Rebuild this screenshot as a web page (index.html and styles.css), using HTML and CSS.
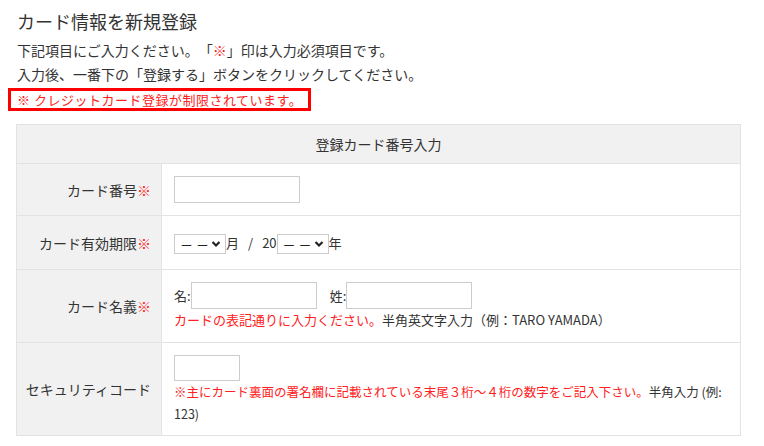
FILE: index.html
```html
<!DOCTYPE html>
<html lang="ja">
<head>
  <meta charset="UTF-8">
  <title>カード情報を新規登録</title>
  <link rel="stylesheet" href="styles.css">
</head>
<body>

  <div class="page">
    <h1>カード情報を新規登録</h1>
    <p class="lead">下記項目にご入力ください。「<span class="req">※</span>」印は入力必須項目です。</p>
    <p class="lead">入力後、一番下の「登録する」ボタンをクリックしてください。</p>
    <div class="alert">※ クレジットカード登録が制限されています。</div>

    <table class="card-form">
      <tr>
        <th class="head" colspan="2">登録カード番号入力</th>
      </tr>
      <tr>
        <th>カード番号<span class="req">※</span></th>
        <td><input type="text" class="field num"></td>
      </tr>
      <tr>
        <th>カード有効期限<span class="req">※</span></th>
        <td class="expiry">
          <span class="sel"><select><option>－ －</option></select><svg viewBox="0 0 10 8" width="10" height="8"><path d="M1.5 2 L5 5.5 L8.5 2" fill="none" stroke="#222" stroke-width="2.2"/></svg></span>月<span class="slash">/</span>20<span class="sel"><select><option>－ －</option></select><svg viewBox="0 0 10 8" width="10" height="8"><path d="M1.5 2 L5 5.5 L8.5 2" fill="none" stroke="#222" stroke-width="2.2"/></svg></span>年
        </td>
      </tr>
      <tr>
        <th>カード名義<span class="req">※</span></th>
        <td>
          <div class="names">
            <label>名:<input type="text" class="field name"></label>
            <label>姓:<input type="text" class="field name"></label>
          </div>
          <p class="note"><span class="red">カードの表記通りに入力ください。</span>半角英文字入力（例：TARO YAMADA）</p>
        </td>
      </tr>
      <tr>
        <th>セキュリティコード</th>
        <td class="sec">
          <input type="text" class="field code">
          <p class="note"><span class="red">※主にカード裏面の署名欄に記載されている末尾３桁～４桁の数字をご記入下さい。</span><span>半角入力 (例:</span> <span>123)</span></p>
        </td>
      </tr>
    </table>
  </div>

</body>
</html>
```

FILE: styles.css
```css
:root {
  --text: #333333;
  --red: #ff2020;
  --line: #e3e3e3;
  --label-bg: #f1f1f1;
  --field-border: #cccccc;
}

body {
  margin: 0;
  font-family: "Noto Sans CJK JP", "Noto Sans", sans-serif;
  color: var(--text);
  background: #ffffff;
  text-spacing-trim: space-all;
}

.page {
  padding: 0 8px;
}

h1 {
  margin: 8px 0 4px 9px;
  font-size: 18px;
  font-weight: normal;
  line-height: 26px;
}

.lead {
  margin: 0 0 0 9px;
  font-size: 14px;
  line-height: 24px;
}

.req,
.red {
  color: var(--red);
}

.alert {
  display: inline-block;
  margin-top: 1px;
  padding: 0 6px;
  border: 3px solid #ff0000;
  color: var(--red);
  font-size: 13px;
  line-height: 17px;
  letter-spacing: 0.5px;
}

.card-form {
  margin: 13px 0 0 8px;
  width: 725px;
  border-collapse: collapse;
  font-size: 14px;
}

.card-form th,
.card-form td {
  border: 1px solid var(--line);
}

.card-form th {
  width: 126px;
  padding: 0 10px 0 8px;
  background: var(--label-bg);
  font-weight: normal;
  text-align: right;
  vertical-align: middle;
  white-space: nowrap;
}

.card-form th.head {
  padding: 9px 0;
  line-height: 20px;
  text-align: center;
}

.card-form td {
  padding: 12px;
  line-height: 20px;
  vertical-align: top;
}

.field {
  box-sizing: border-box;
  display: block;
  height: 27px;
  border: 1px solid var(--field-border);
  border-radius: 0;
  margin: 0;
  padding: 0 4px;
  font: inherit;
}

.field.num {
  width: 126px;
}

.card-form td.expiry {
  height: 29px;
  font-size: 13px;
  line-height: 29px;
}

.expiry .sel {
  position: relative;
  display: inline-block;
  vertical-align: middle;
  line-height: 20px;
}

.sel select {
  appearance: none;
  display: block;
  box-sizing: border-box;
  width: 52px;
  height: 20px;
  margin: 0;
  padding: 0 0 0 5px;
  border: 1px solid var(--field-border);
  border-radius: 0;
  background: #fff;
  font: 13px "Noto Sans CJK JP", sans-serif;
  color: #222;
}

.sel svg {
  position: absolute;
  right: 5px;
  top: 6px;
}

.slash {
  margin: 0 9px;
}

.names {
  display: flex;
  gap: 13px;
  font-size: 13px;
}

.names label {
  display: flex;
  align-items: center;
}

.field.name {
  width: 126px;
}

.note {
  margin: 1px 0 0;
  font-size: 13px;
  line-height: 20px;
}

.card-form td.sec {
  padding-bottom: 10px;
}

.field.code {
  width: 66px;
  height: 26px;
}

.sec .note {
  margin: 0;
  font-size: 12.5px;
  line-height: 22px;
}
```
